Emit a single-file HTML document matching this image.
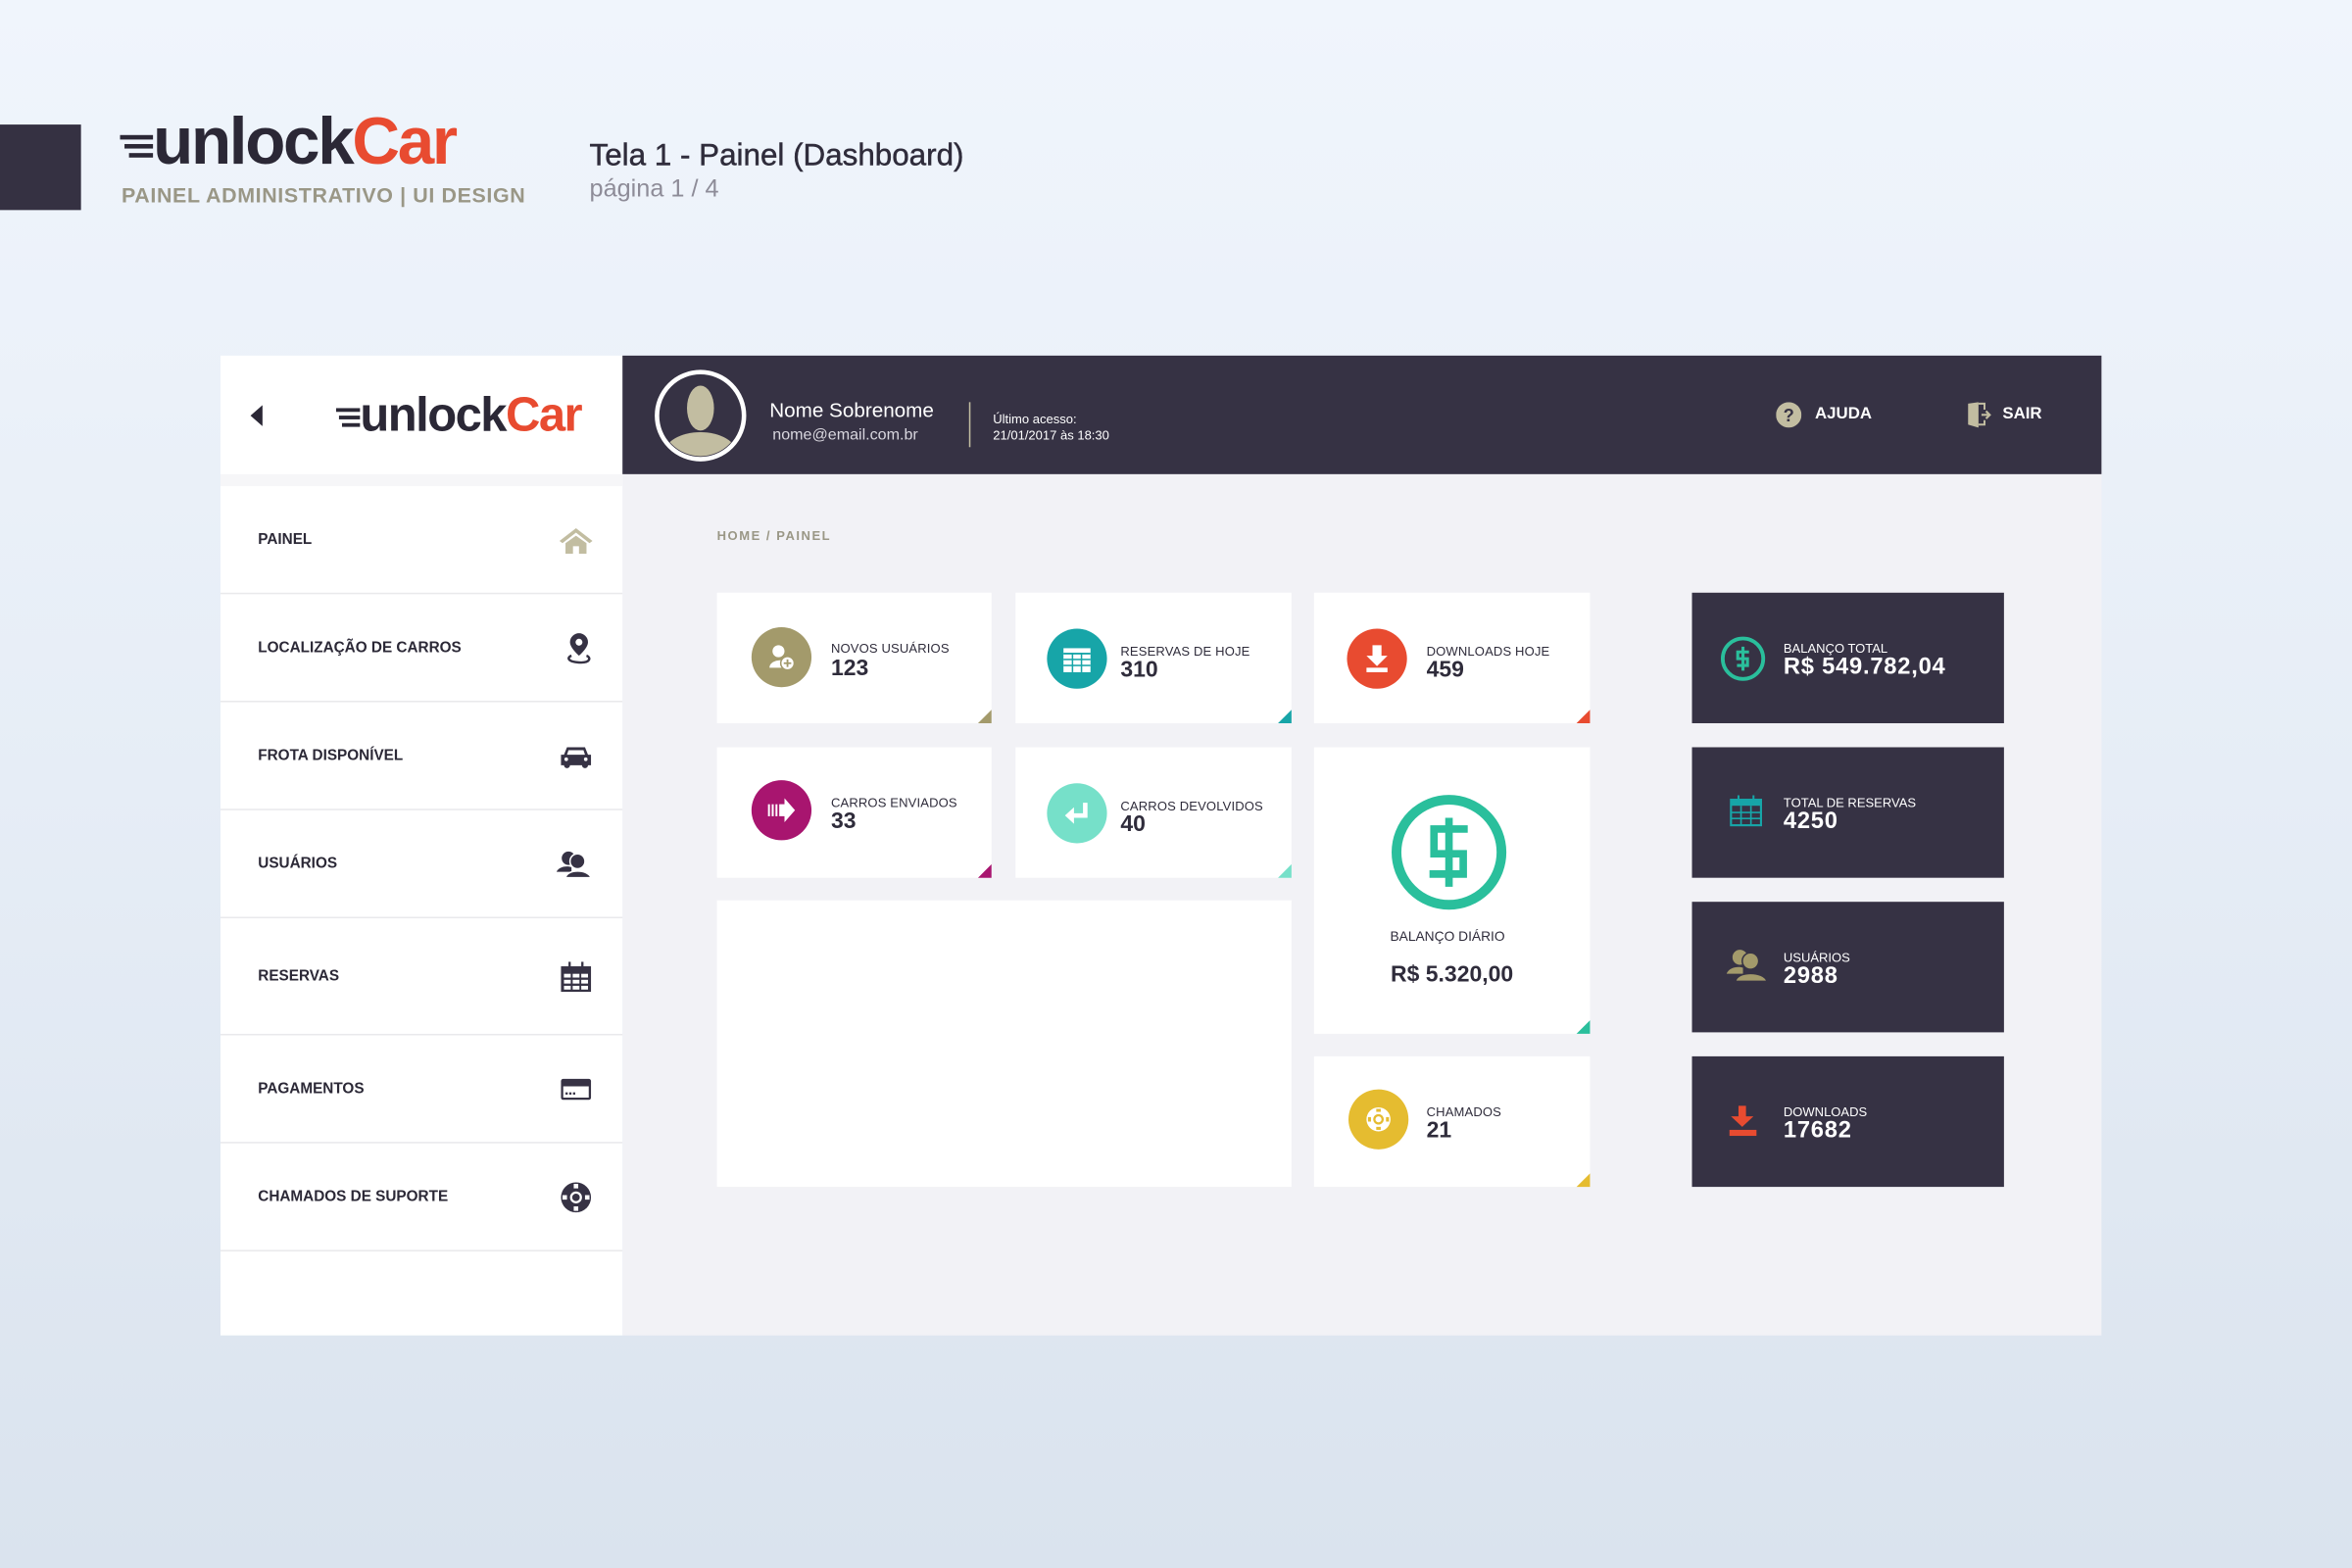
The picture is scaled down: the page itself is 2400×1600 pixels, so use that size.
<!DOCTYPE html>
<html><head><meta charset="utf-8">
<style>
*{margin:0;padding:0;box-sizing:border-box}
html,body{width:2400px;height:1600px;overflow:hidden}
body{background:linear-gradient(180deg,#f0f5fc 0%,#e6edf6 50%,#dae3ee 100%);font-family:"Liberation Sans",sans-serif}
#s{position:absolute;left:0;top:0;width:1568px;height:1045px;transform:scale(1.5306,1.5311);transform-origin:0 0}
.a{position:absolute}
.logo{font-weight:bold;letter-spacing:-1.5px;color:#2b2836;white-space:nowrap}
.logo b{color:#e84b30}
.side{left:147px;top:237px;width:268px;height:653px;background:#fff}
.item{position:absolute;left:0;width:268px;border-bottom:1px solid #e9e9ec;font-size:10px;font-weight:bold;color:#2b2836}
.item span{position:absolute;left:25px;top:50%;transform:translateY(-50%)}
.item svg{position:absolute;right:20px;top:50%;transform:translateY(-50%)}
.card{position:absolute;background:#fff}
.card .tri{position:absolute;right:0;bottom:0;width:0;height:0;border-style:solid;border-width:0 0 9px 9px}
.ic{position:absolute;width:40px;height:40px;border-radius:50%;left:23px;top:23px}
.ic svg{position:absolute;left:10px;top:10px}
.lbl{position:absolute;left:76px;font-size:8.5px;color:#2f2c3b;letter-spacing:.1px}
.num{position:absolute;left:76px;font-size:15px;font-weight:bold;color:#2f2c3b}
.dk{position:absolute;left:1128px;width:208px;height:87px;background:#363244}
.dk .l{position:absolute;left:61px;top:32px;font-size:8.5px;color:#fff}
.dk .n{position:absolute;left:61px;top:41px;font-size:15.5px;font-weight:bold;color:#fff;letter-spacing:.5px}
.dk svg{position:absolute;left:20px;top:28px}
</style></head><body><div id="s">
<div class="a" style="left:0;top:83px;width:54px;height:57px;background:#353142"></div>
<svg class="a" style="left:80px;top:87px" width="24" height="24"><g fill="#2b2836"><rect x="0" y="3" width="22" height="3"/><rect x="3" y="9" width="19" height="3"/><rect x="6" y="15" width="16" height="3"/></g></svg>
<div class="a logo" style="left:102px;top:70px;font-size:44px;line-height:50px">unlock<b>Car</b></div>
<div class="a" style="left:81px;top:122px;font-size:14px;color:#9a9786;font-weight:bold;letter-spacing:.4px">PAINEL ADMINISTRATIVO | UI DESIGN</div>
<div class="a" style="left:393px;top:92px;font-size:20.5px;color:#2f2c3b;-webkit-text-stroke:.3px #2f2c3b">Tela 1 - Painel (Dashboard)</div>
<div class="a" style="left:393px;top:117px;font-size:16.5px;color:#8e8c98">página 1 / 4</div>

<div class="a" style="left:415px;top:237px;width:986px;height:653px;background:#f2f2f6"></div>
<div class="a side"></div>
<div class="a" style="left:147px;top:316px;width:268px;height:8px;background:#f6f6f8"></div>
<svg class="a" style="left:166px;top:270px" width="10" height="14"><path d="M9 0V14L1 7Z" fill="#2b2836"/></svg>
<svg class="a" style="left:224px;top:270px" width="18" height="16"><g fill="#2b2836"><rect x="0" y="2" width="16" height="2.5"/><rect x="2" y="7" width="14" height="2.5"/><rect x="4" y="12" width="12" height="2.5"/></g></svg>
<div class="a logo" style="left:240px;top:256px;font-size:32px;line-height:40px;letter-spacing:-1px">unlock<b>Car</b></div>

<div class="a" style="left:415px;top:237px;width:986px;height:79px;background:#363244"></div>
<svg class="a" style="left:436px;top:246px" width="62" height="62"><circle cx="31" cy="31" r="29" fill="#363244" stroke="#fff" stroke-width="3"/><clipPath id="c"><circle cx="31" cy="31" r="27"/></clipPath><g clip-path="url(#c)" fill="#c2bda1"><ellipse cx="31" cy="26" rx="9" ry="15"/><ellipse cx="31" cy="56" rx="24" ry="14"/></g></svg>
<div class="a" style="left:513px;top:266px;font-size:13.5px;color:#fff">Nome Sobrenome</div>
<div class="a" style="left:515px;top:284px;font-size:10.5px;color:#d8d6de">nome@email.com.br</div>
<div class="a" style="left:646px;top:268px;width:1px;height:30px;background:#c2bda1"></div>
<div class="a" style="left:662px;top:274px;font-size:8.5px;color:#fff;line-height:11px">Último acesso:<br>21/01/2017 às 18:30</div>
<svg class="a" style="left:1184px;top:268px" width="17" height="17"><circle cx="8.5" cy="8.5" r="8.5" fill="#c2bda1"/><text x="8.5" y="13" text-anchor="middle" font-size="12" font-weight="bold" fill="#363244" font-family="Liberation Sans">?</text></svg>
<div class="a" style="left:1210px;top:270px;font-size:11px;font-weight:bold;color:#fff">AJUDA</div>
<svg class="a" style="left:1312px;top:268px" width="16" height="17"><path d="M0 1L7 0V17L0 15Z" fill="#c2bda1"/><path d="M7 1H11V5M11 12V15H7" fill="none" stroke="#c2bda1" stroke-width="1.3"/><path d="M9 8.5H14M12 6L14.5 8.5L12 11" fill="none" stroke="#c2bda1" stroke-width="1.4"/></svg>
<div class="a" style="left:1335px;top:270px;font-size:11px;font-weight:bold;color:#fff">SAIR</div>

<div class="item" style="top:324px;height:72px;left:147px"><span>PAINEL</span><svg width="22" height="18"><path d="M11 1L0 9.5L2 11L11 4L20 11L22 9.5Z M4 11V18H9V13H13V18H18V11L11 6Z" fill="#c2bda1"/></svg></div>
<div class="item" style="top:396px;height:72px;left:147px"><span>LOCALIZAÇÃO DE CARROS</span><svg width="18" height="22"><path d="M9 1A6 6 0 0 0 3 7C3 11 9 16 9 16S15 11 15 7A6 6 0 0 0 9 1Z" fill="#363244"/><circle cx="9" cy="7" r="2.3" fill="#fff"/><path d="M4 16C1 17 1 20 9 20.5S17 17 14 16" fill="none" stroke="#363244" stroke-width="1.6"/></svg></div>
<div class="item" style="top:468px;height:72px;left:147px"><span>FROTA DISPONÍVEL</span><svg width="22" height="18"><path d="M5 3H17L19 8H21V15H1V8H3Z" fill="#363244"/><path d="M6 5H16L17 8H5Z" fill="#fff"/><circle cx="5" cy="15" r="2" fill="#363244"/><circle cx="17" cy="15" r="2" fill="#363244"/><circle cx="4.5" cy="11" r="1.2" fill="#fff"/><circle cx="17.5" cy="11" r="1.2" fill="#fff"/></svg></div>
<div class="item" style="top:540px;height:72px;left:147px"><span>USUÁRIOS</span><svg width="24" height="20"><circle cx="8" cy="6" r="4.5" fill="#363244"/><path d="M0 15C2 11 8 11 10 12V15Z" fill="#363244"/><circle cx="14" cy="8" r="5" fill="#363244" stroke="#fff" stroke-width="1"/><path d="M6 19C7 13 21 13 23 19Z" fill="#363244" stroke="#fff" stroke-width="1"/></svg></div>
<div class="item" style="top:612px;height:78px;left:147px"><span>RESERVAS</span><svg width="22" height="22"><rect x="1" y="4" width="20" height="17" fill="#363244"/><g fill="#fff"><rect x="3" y="9" width="4.5" height="2.5"/><rect x="8.8" y="9" width="4.5" height="2.5"/><rect x="14.5" y="9" width="4.5" height="2.5"/><rect x="3" y="13" width="4.5" height="2.5"/><rect x="8.8" y="13" width="4.5" height="2.5"/><rect x="14.5" y="13" width="4.5" height="2.5"/><rect x="3" y="17" width="4.5" height="2.5"/><rect x="8.8" y="17" width="4.5" height="2.5"/><rect x="14.5" y="17" width="4.5" height="2.5"/></g><rect x="6" y="1" width="1.5" height="5" fill="#363244"/><rect x="14.5" y="1" width="1.5" height="5" fill="#363244"/></svg></div>
<div class="item" style="top:690px;height:72px;left:147px"><span>PAGAMENTOS</span><svg width="22" height="18"><rect x="1" y="2" width="20" height="14" rx="1.5" fill="#363244"/><rect x="2.5" y="7" width="17" height="7.5" fill="#fff"/><rect x="4" y="11" width="1.5" height="1.5" fill="#363244"/><rect x="6.5" y="11" width="1.5" height="1.5" fill="#363244"/><rect x="9" y="11" width="1.5" height="1.5" fill="#363244"/></svg></div>
<div class="item" style="top:762px;height:72px;left:147px"><span>CHAMADOS DE SUPORTE</span><svg width="22" height="22"><circle cx="11" cy="11" r="10" fill="#363244"/><circle cx="11" cy="11" r="4" fill="#fff"/><g fill="#fff"><rect x="9.5" y="2" width="3" height="3"/><rect x="9.5" y="17" width="3" height="3"/><rect x="2" y="9.5" width="3" height="3"/><rect x="17" y="9.5" width="3" height="3"/></g><circle cx="11" cy="11" r="2.5" fill="#363244"/></svg></div>

<div class="a" style="left:478px;top:352px;font-size:8.5px;font-weight:bold;color:#9a9786;letter-spacing:1px">HOME / PAINEL</div>

<div class="card" style="left:478px;top:395px;width:183px;height:87px"><div class="ic" style="background:#a39a6b"><svg width="20" height="20"><circle cx="8" cy="6" r="4" fill="#fff"/><path d="M2 17C2 11 14 11 14 14V17Z" fill="#fff"/><circle cx="14" cy="14" r="4.5" fill="#fff" stroke="#a39a6b" stroke-width="1"/><path d="M14 11.5V16.5M11.5 14H16.5" stroke="#a39a6b" stroke-width="1.2"/></svg></div><div class="lbl" style="top:32px">NOVOS USUÁRIOS</div><div class="num" style="top:42px">123</div><div class="tri" style="border-color:transparent transparent #a39a6b transparent"></div></div>
<div class="card" style="left:677px;top:395px;width:184px;height:87px"><div class="ic" style="background:#17a5a8;left:21px;top:24px"><svg width="20" height="20"><rect x="1" y="3" width="18" height="16" fill="#fff"/><g fill="#17a5a8"><rect x="1" y="6" width="18" height="1.2"/><rect x="1" y="10" width="18" height="1"/><rect x="1" y="14" width="18" height="1"/><rect x="6.5" y="6" width="1" height="13"/><rect x="12.5" y="6" width="1" height="13"/></g></svg></div><div class="lbl" style="left:70px;top:34px">RESERVAS DE HOJE</div><div class="num" style="left:70px;top:43px">310</div><div class="tri" style="border-color:transparent transparent #17a5a8 transparent"></div></div>
<div class="card" style="left:876px;top:395px;width:184px;height:87px"><div class="ic" style="background:#e84b30;left:22px;top:24px"><svg width="20" height="20"><path d="M7 1H13V8H17L10 15L3 8H7Z" fill="#fff"/><rect x="3" y="16" width="14" height="3" fill="#fff"/></svg></div><div class="lbl" style="left:75px;top:34px">DOWNLOADS HOJE</div><div class="num" style="left:75px;top:43px">459</div><div class="tri" style="border-color:transparent transparent #e84b30 transparent"></div></div>

<div class="card" style="left:478px;top:498px;width:183px;height:87px"><div class="ic" style="background:#a8156f;top:22px"><svg width="20" height="20"><g fill="#fff"><rect x="1" y="6" width="1.3" height="8"/><rect x="3.5" y="6" width="1.3" height="8"/><rect x="6" y="6" width="1.3" height="8"/><path d="M8.5 6H12V2L19 10L12 18V14H8.5Z"/></g></svg></div><div class="lbl" style="top:32px">CARROS ENVIADOS</div><div class="num" style="top:41px">33</div><div class="tri" style="border-color:transparent transparent #a8156f transparent"></div></div>
<div class="card" style="left:677px;top:498px;width:184px;height:87px"><div class="ic" style="background:#76e0c9;left:21px;top:24px"><svg width="20" height="20"><path d="M14 3H17V13H8V17L2 11.5L8 6V10H14Z" fill="#fff"/></svg></div><div class="lbl" style="left:70px;top:34px">CARROS DEVOLVIDOS</div><div class="num" style="left:70px;top:43px">40</div><div class="tri" style="border-color:transparent transparent #76e0c9 transparent"></div></div>

<div class="card" style="left:478px;top:600px;width:383px;height:191px"></div>

<div class="card" style="left:876px;top:498px;width:184px;height:191px"><svg class="a" style="left:51px;top:31px" width="78" height="78"><circle cx="39" cy="39" r="35" fill="none" stroke="#2abf9c" stroke-width="6.5"/><path d="M39 16V62" fill="none" stroke="#2abf9c" stroke-width="5"/><path d="M51.5 23.5H29V40H48.5V53.5H26" fill="none" stroke="#2abf9c" stroke-width="5" stroke-linejoin="miter"/></svg><div class="a" style="left:0;width:178px;text-align:center;top:121px;font-size:9px;color:#2f2c3b">BALANÇO DIÁRIO</div><div class="a" style="left:0;width:184px;text-align:center;top:143px;font-size:15px;font-weight:bold;color:#2f2c3b">R$ 5.320,00</div><div class="tri" style="border-color:transparent transparent #2abf9c transparent"></div></div>
<div class="card" style="left:876px;top:704px;width:184px;height:87px"><div class="ic" style="background:#e5bc30;left:23px;top:22px"><svg width="20" height="20"><circle cx="10" cy="10" r="8" fill="#fff"/><circle cx="10" cy="10" r="3.5" fill="#e5bc30"/><circle cx="10" cy="10" r="2" fill="#fff"/><g fill="#e5bc30"><rect x="3" y="8.5" width="2" height="3"/><rect x="15" y="8.5" width="2" height="3"/><rect x="8.5" y="3" width="3" height="2"/><rect x="8.5" y="15" width="3" height="2"/></g></svg></div><div class="lbl" style="left:75px;top:32px">CHAMADOS</div><div class="num" style="left:75px;top:41px">21</div><div class="tri" style="border-color:transparent transparent #e5bc30 transparent"></div></div>

<div class="dk" style="top:395px"><svg width="30" height="30" style="left:19px;top:29px"><circle cx="15" cy="15" r="13.5" fill="none" stroke="#2abf9c" stroke-width="2.5"/><path d="M15 7V23" fill="none" stroke="#2abf9c" stroke-width="2"/><path d="M19 10.5H11.5V15H18V19.5H11" fill="none" stroke="#2abf9c" stroke-width="2"/></svg><div class="l">BALANÇO TOTAL</div><div class="n">R$ 549.782,04</div></div>
<div class="dk" style="top:498px"><svg width="22" height="22" style="left:25px;top:31px"><rect x="1" y="4" width="20" height="17" fill="none" stroke="#17a5a8" stroke-width="1.4"/><rect x="1" y="4" width="20" height="4" fill="#17a5a8"/><g stroke="#17a5a8" stroke-width="1.1"><path d="M1 12.5H21M1 16.5H21M7.7 8V21M14.3 8V21"/></g><path d="M6 1V6M16 1V6" stroke="#17a5a8" stroke-width="1.3"/></svg><div class="l">TOTAL DE RESERVAS</div><div class="n">4250</div></div>
<div class="dk" style="top:601px"><svg width="28" height="24" style="left:23px;top:30px"><circle cx="9" cy="7" r="5" fill="#a39a6b"/><path d="M0 18C2 13 9 13 11 14V18Z" fill="#a39a6b"/><circle cx="16" cy="9.5" r="5.5" fill="#a39a6b" stroke="#363244" stroke-width="1"/><path d="M6 23C7 16 25 16 27 23Z" fill="#a39a6b" stroke="#363244" stroke-width="1"/></svg><div class="l">USUÁRIOS</div><div class="n">2988</div></div>
<div class="dk" style="top:704px"><svg width="20" height="22" style="left:24px;top:32px"><path d="M7 1H12V8H17L9.5 15L2 8H7Z" fill="#e84b30"/><rect x="1" y="17" width="18" height="4" fill="#e84b30"/></svg><div class="l">DOWNLOADS</div><div class="n">17682</div></div>
</div></body></html>
